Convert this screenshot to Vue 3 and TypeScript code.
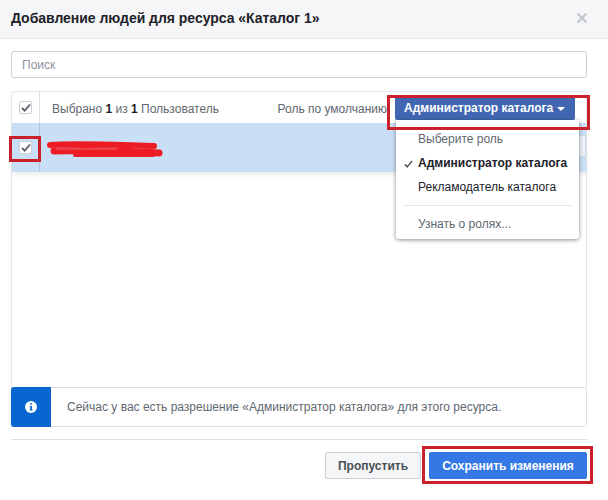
<script setup lang="ts">
const roles = [
  { label: 'Выберите роль', cls: 'muted', checked: false },
  { label: 'Администратор каталога', cls: 'active', checked: true },
  { label: 'Рекламодатель каталога', cls: '', checked: false },
]
</script>

<template>
  <div class="dialog">
    <header class="head">
      <h1>Добавление людей для ресурса «Каталог 1»</h1>
      <svg class="close" width="12" height="12" viewBox="0 0 12 12"><path d="M1.5 1.5l9 9M10.5 1.5l-9 9" stroke="#c4c7cc" stroke-width="2.4" fill="none"/></svg>
    </header>
    <main class="body">
      <div class="search">Поиск</div>
      <section class="table">
        <div class="thead">
          <div class="cell-check"><span class="box"><svg width="10" height="9" viewBox="0 0 10 9"><path d="M1 5l2.6 2.6L9 1.5" stroke="#5a5f68" stroke-width="1.8" fill="none"/></svg></span></div>
          <div class="selected-text">Выбрано <b>1</b> из <b>1</b> Пользователь</div>
          <div class="default-role">
            <span>Роль по умолчанию</span>
            <div class="role-wrap">
              <button class="role-btn">Администратор каталога<i class="caret"></i></button>
              <div class="menu">
                <div v-for="r in roles" :key="r.label" class="menu-item" :class="r.cls">
                  <svg v-if="r.checked" class="tick" width="9" height="8" viewBox="0 0 9 8"><path d="M.8 4.4l2.4 2.4L8.2 1" stroke="#5a5f68" stroke-width="1.6" fill="none"/></svg>
                  {{ r.label }}
                </div>
                <div class="menu-sep"></div>
                <div class="menu-item link">Узнать о ролях...</div>
              </div>
            </div>
          </div>
        </div>
        <div class="row">
          <div class="cell-check"><span class="box"><svg width="10" height="9" viewBox="0 0 10 9"><path d="M1 5l2.6 2.6L9 1.5" stroke="#5a5f68" stroke-width="1.8" fill="none"/></svg></span></div>
          <svg class="scribble" width="116" height="18" viewBox="0 0 116 18">
            <path d="M3 5 C30 3 70 5 107 6" stroke="#ed1c24" stroke-width="6" stroke-linecap="round" fill="none"/>
            <path d="M7 11 C40 10 80 11 112 13" stroke="#ed1c24" stroke-width="7" stroke-linecap="round" fill="none"/>
            <path d="M28 15 L106 15" stroke="#ed1c24" stroke-width="4" stroke-linecap="round" fill="none"/>
            <path d="M9 9 L70 9" stroke="#f0606a" stroke-width="1" fill="none"/>
          </svg>
          <div class="row-select"></div>
        </div>
        <div class="empty"></div>
      </section>
      <section class="notice">
        <div class="notice-icon">
          <svg width="12" height="12" viewBox="0 0 12 12"><circle cx="6" cy="6" r="6" fill="#fff"/><path d="M5.1 2.2h1.8v1.6H5.1zM4.6 5h2.3v3.6h.7v.9H4.6v-.9h.6V5.9h-.6z" fill="#0866d0"/></svg>
        </div>
        <p>Сейчас у вас есть разрешение «Администратор каталога» для этого ресурса.</p>
      </section>
      <footer class="foot">
        <button class="btn skip">Пропустить</button>
        <button class="btn save">Сохранить изменения</button>
      </footer>
    </main>
    <div class="mark mark-role"></div>
    <div class="mark mark-check"></div>
    <div class="mark mark-save"></div>
  </div>
</template>

<style>
html, body { margin: 0; background: #fff; }
</style>

<style scoped>
.dialog {
  position: relative;
  width: 608px;
  height: 500px;
  overflow: hidden;
  background: #fff;
  font-family: "Liberation Sans", Arial, sans-serif;
  color: #4b4f56;
}
.head {
  box-sizing: border-box;
  height: 39px;
  display: flex;
  align-items: center;
  justify-content: space-between;
  padding: 0 20px 2px 11px;
  background: #f5f6f7;
  border-bottom: 1px solid #e5e6e9;
}
h1 {
  margin: 0;
  font-size: 14px;
  font-weight: 700;
  color: #1d2129;
  letter-spacing: -0.03px;
}
.body {
  display: flex;
  flex-direction: column;
  padding: 12px 21px 0 11px;
}
.search {
  box-sizing: border-box;
  height: 27px;
  line-height: 26px;
  padding-left: 10px;
  border: 1px solid #ccd0d5;
  border-radius: 3px;
  font-size: 12px;
  color: #90949c;
}
.table {
  box-sizing: border-box;
  height: 296px;
  margin-top: 13px;
  border: 1px solid #e5e6e9;
  border-bottom: 0;
  border-radius: 3px 3px 0 0;
}
.thead {
  height: 31px;
  display: flex;
  align-items: center;
}
.cell-check {
  box-sizing: border-box;
  width: 28px;
  align-self: stretch;
  flex: none;
  display: flex;
  align-items: center;
  justify-content: center;
  border-right: 1px solid #dddfe2;
}
.box {
  box-sizing: border-box;
  width: 13px;
  height: 13px;
  display: flex;
  align-items: center;
  justify-content: center;
  background: #fff;
  border: 1px solid #ccd0d5;
  border-radius: 2px;
}
.selected-text {
  margin-left: 12px;
  font-size: 12px;
  color: #606770;
  position: relative;
  top: 1px;
}
.selected-text b { color: #1d2129; }
.default-role {
  margin-left: auto;
  margin-right: 11px;
  display: flex;
  align-items: center;
  font-size: 12px;
  color: #606770;
}
.default-role > span { margin-right: 8px; position: relative; top: 1px; }
.role-wrap { position: relative; }
.role-btn {
  display: flex;
  align-items: center;
  box-sizing: border-box;
  width: 180px;
  height: 24px;
  padding: 0 9px;
  border: 0;
  border-radius: 2px;
  background: #4267b2;
  color: #fff;
  font: 700 12px "Liberation Sans", Arial, sans-serif;
  white-space: nowrap;
}
.caret {
  margin-left: 4px;
  margin-top: 2px;
  border-left: 4px solid transparent;
  border-right: 4px solid transparent;
  border-top: 4px solid #fff;
}
.menu {
  position: absolute;
  z-index: 2;
  left: 1px;
  top: 24px;
  box-sizing: border-box;
  width: 183px;
  height: 119px;
  padding-top: 7px;
  background: #fff;
  border-radius: 0 0 3px 3px;
  box-shadow: 0 1px 4px rgba(0, 0, 0, 0.45);
}
.menu-item {
  position: relative;
  height: 24px;
  line-height: 24px;
  padding-left: 22px;
  font-size: 12px;
  color: #1d2129;
  white-space: nowrap;
}
.menu-item.muted, .menu-item.link { color: #606770; }
.menu-item.active { font-weight: 700; }
.tick { position: absolute; left: 8px; top: 9px; }
.menu-sep { height: 1px; margin: 6px 7px; background: #e5e6e9; }
.row {
  position: relative;
  height: 49px;
  display: flex;
  align-items: center;
  background: #c9dff5;
  box-shadow: 0 3px 5px rgba(0, 0, 0, 0.08);
}
.row .cell-check { border-right-color: #b0c4da; }
.scribble { margin-left: 7px; margin-top: 3px; }
.row-select {
  position: absolute;
  right: 0;
  top: 12px;
  width: 60px;
  height: 22px;
  background: #edf2f8;
  border: 1px solid #d3dbe5;
  box-sizing: border-box;
}
.notice {
  box-sizing: border-box;
  height: 40px;
  display: flex;
  align-items: center;
  border: 1px solid #dddfe2;
  border-left: 0;
  border-radius: 3px;
  position: relative;
}
.notice-icon {
  align-self: stretch;
  width: 40px;
  margin: -1px 0;
  display: flex;
  align-items: center;
  justify-content: center;
  background: #0866d0;
  border-radius: 3px 0 0 3px;
}
.notice p {
  margin: 0 0 0 16px;
  font-size: 12px;
  color: #606770;
}
.foot {
  margin-top: 12px;
  padding-top: 12px;
  height: 28px;
  display: flex;
  justify-content: flex-end;
  gap: 8px;
  border-top: 1px solid #dddfe2;
}
.btn {
  box-sizing: border-box;
  height: 27px;
  border-radius: 2px;
  font: 700 12px "Liberation Sans", Arial, sans-serif;
}
.skip {
  width: 96px;
  background: #f5f6f7;
  color: #4b4f56;
  border: 1px solid #ccd0d5;
}
.save {
  width: 158px;
  background: #3578e5;
  color: #fff;
  border: 1px solid #3578e5;
}
.mark {
  position: absolute;
  z-index: 3;
  box-sizing: border-box;
  border: 3px solid #c9202c;
  pointer-events: none;
}
.mark-role { left: 387px; top: 95px; width: 203px; height: 35px; }
.mark-check { left: 9px; top: 136px; width: 32px; height: 26px; }
.mark-save { left: 422px; top: 446px; width: 171px; height: 38px; }
</style>
